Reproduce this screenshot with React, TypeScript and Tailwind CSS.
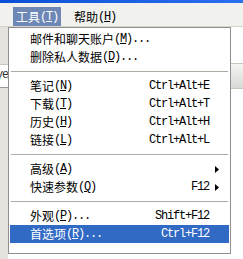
import React from 'react';

type Item =
  | { sep: true }
  | { sep?: false; text: string; key: string; dots?: boolean; shortcut?: string; sub?: boolean; active?: boolean };

const items: Item[] = [
  { text: '邮件和聊天账户', key: 'M', dots: true },
  { text: '删除私人数据', key: 'D', dots: true },
  { sep: true },
  { text: '笔记', key: 'N', shortcut: 'Ctrl+Alt+E' },
  { text: '下载', key: 'T', shortcut: 'Ctrl+Alt+T' },
  { text: '历史', key: 'H', shortcut: 'Ctrl+Alt+H' },
  { text: '链接', key: 'L', shortcut: 'Ctrl+Alt+L' },
  { sep: true },
  { text: '高级', key: 'A', sub: true },
  { text: '快速参数', key: 'Q', shortcut: 'F12', sub: true },
  { sep: true },
  { text: '外观', key: 'P', dots: true, shortcut: 'Shift+F12' },
  { text: '首选项', key: 'R', dots: true, shortcut: 'Ctrl+F12', active: true },
];

const cjk = "font-['Noto_Sans_CJK_SC',sans-serif] text-[12px] leading-[14px]";
const mono = "font-['Liberation_Mono',monospace] text-[12px] leading-[14px] tracking-[-1.2px]";

// label like 笔记(N) with mnemonic underlined
const Label = ({ text, k, dots }: { text: string; k: string; dots?: boolean }) => (
  <span className="flex items-center whitespace-nowrap">
    <span className={cjk}>{text}</span>
    <span className={mono}>
      (<span className="underline underline-offset-1">{k}</span>){dots ? '...' : ''}
    </span>
  </span>
);

const Arrow = () => (
  <svg width="4" height="7" viewBox="0 0 4 7" className="shrink-0">
    <path d="M0 0 L4 3.5 L0 7 Z" fill="currentColor" />
  </svg>
);

export default function App() {
  return (
    <div className="w-[243px] h-[259px] overflow-hidden bg-white flex flex-col text-black">
      {/* title bar edge */}
      <div className="h-[3px] bg-gradient-to-r from-[#0a4fd6] to-[#2b70ef]" />

      {/* menu bar */}
      <div className="h-[24px] bg-[#f1f1ee] flex items-end pl-[13px] border-b border-[#d6d3c9]">
        <div className="h-[19px] px-[3px] flex items-center bg-[#6d88b6] text-white">
          <Label text="工具" k="T" />
        </div>
        <div className="h-[19px] pl-[13px] pr-[6px] flex items-center">
          <Label text="帮助" k="H" />
        </div>
      </div>

      <div className="flex flex-1 min-h-0">
        {/* window behind, left */}
        <div className="w-[8px] bg-[#e4e3dd] flex flex-col overflow-hidden">
          <div className="h-[38px] border-b border-[#c9c7bd]" />
          <div className="h-[3px] bg-white" />
          <div className="h-[14px] bg-white overflow-hidden">
            <span className={`${mono} block w-[14px] -ml-[4px] text-[#333]`}>ye</span>
          </div>
          <div className="h-[6px] bg-white border-b border-[#9c9a92]" />
        </div>

        {/* dropdown */}
        <div className="w-[223px] h-[227px] border border-[#8f8f8f] bg-white pt-[2px] px-[1px] flex flex-col">
          {items.map((it, i) =>
            it.sep ? (
              <div key={i} className="h-[11px] flex items-center px-[1px]">
                <div className="h-px w-full bg-[#acaaa1]" />
              </div>
            ) : (
              <div
                key={i}
                className={
                  'h-[18px] shrink-0 flex items-center pl-[20px] pr-[10px] ' +
                  (it.active ? 'bg-[#316ac5] text-white' : '')
                }
              >
                <Label text={it.text} k={it.key} dots={it.dots} />
                <span className="flex-1" />
                {it.shortcut && <span className={mono}>{it.shortcut}</span>}
                {it.sub && (
                  <span className="ml-[6px]">
                    <Arrow />
                  </span>
                )}
                {!it.sub && <span className="w-[4px] ml-[6px]" />}
              </div>
            )
          )}
        </div>

        {/* right side, window behind */}
        <div className="flex-1 flex flex-col">
          <div className="h-[36px]" />
          <div className="h-[26px] bg-gradient-to-b from-[#f4f4f2] to-[#d9d9d5] border-y border-[#c8c6bd]" />
        </div>
      </div>
    </div>
  );
}
